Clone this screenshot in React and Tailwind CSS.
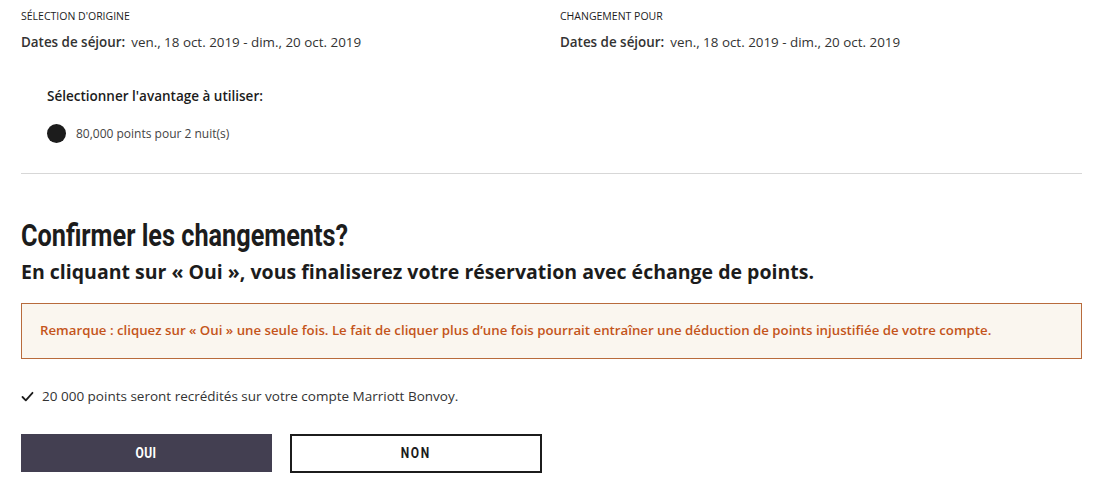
import React from "react";

const body = { fontFamily: "'Open Sans', Lato, sans-serif" };
const cond = { fontFamily: "Roboto, 'Liberation Sans', sans-serif" };

function Check() {
  return (
    <svg width="13" height="11" viewBox="0 0 13 11" className="shrink-0">
      <path d="M1.5 6 L4.8 9.3 L11.5 1.8" fill="none" stroke="#1c1c1c" strokeWidth="1.8" strokeLinecap="round" strokeLinejoin="round" />
    </svg>
  );
}

function Col({ label }) {
  return (
    <div>
      <div className="text-[10.5px] leading-[14px] text-[#1c1c1c]">{label}</div>
      <div className="mt-[10px] text-[13.4px] leading-[18px] text-[#333] whitespace-nowrap">
        <span className="font-semibold">Dates de séjour:</span>
        <span className="ml-[6px]">ven., 18 oct. 2019 - dim., 20 oct. 2019</span>
      </div>
    </div>
  );
}

export default function App() {
  return (
    <div className="w-[1097px] h-[492px] bg-white text-[#1c1c1c] px-[21px] pt-[9px] overflow-hidden" style={body}>
      <div className="grid grid-cols-[539px_1fr]">
        <Col label="SÉLECTION D'ORIGINE" />
        <Col label="CHANGEMENT POUR" />
      </div>
      <div className="pl-[26px] mt-[37px]">
        <div className="text-[13.5px] leading-[16px] font-semibold text-[#1c1c1c]">Sélectionner l'avantage à utiliser:</div>
        <div className="mt-[20px] flex items-center gap-[10px] h-[19px]">
          <span className="w-[19px] h-[19px] rounded-full bg-[#1c1c1c] inline-block" />
          <span className="text-[12px] text-[#444]">80,000 points pour 2 nuit(s)</span>
        </div>
      </div>
      <div className="mt-[30px] h-px bg-[#d7d7d7] w-[1061px]" />
      <div className="mt-[44px] h-[36px] flex items-center">
        <h1 className="inline-block origin-left scale-x-[0.815] text-[31px] leading-[36px] font-bold text-[#1c1c1c] whitespace-nowrap" style={cond}>Confirmer les changements?</h1>
      </div>
      <h2 className="mt-[6px] text-[19.5px] leading-[24px] font-bold text-[#1c1c1c] whitespace-nowrap">En cliquant sur « Oui », vous finaliserez votre réservation avec échange de points.</h2>
      <div className="mt-[19px] w-[1061px] h-[56px] border border-[#b86b3c] bg-[#faf6ef] flex items-center px-[18px]">
        <span className="text-[13.25px] font-semibold text-[#c4541a] whitespace-nowrap">Remarque : cliquez sur « Oui » une seule fois. Le fait de cliquer plus d’une fois pourrait entraîner une déduction de points injustifiée de votre compte.</span>
      </div>
      <div className="mt-[28px] h-[18px] flex items-center gap-[8px] text-[13.5px] text-[#333]">
        <Check />
        <span>20 000 points seront recrédités sur votre compte Marriott Bonvoy.</span>
      </div>
      <div className="mt-[29px] flex gap-[18px]">
        <button className="w-[251px] h-[38px] bg-[#433f51] text-white flex items-center justify-center">
          <span className="inline-block scale-x-[0.8] text-[15px] font-bold tracking-[0.5px]" style={cond}>OUI</span>
        </button>
        <button className="w-[252px] h-[39px] border-2 border-[#1c1c1c] bg-white text-[#1c1c1c] flex items-center justify-center">
          <span className="inline-block scale-x-[0.8] text-[15px] font-bold tracking-[2px]" style={cond}>NON</span>
        </button>
      </div>
    </div>
  );
}
